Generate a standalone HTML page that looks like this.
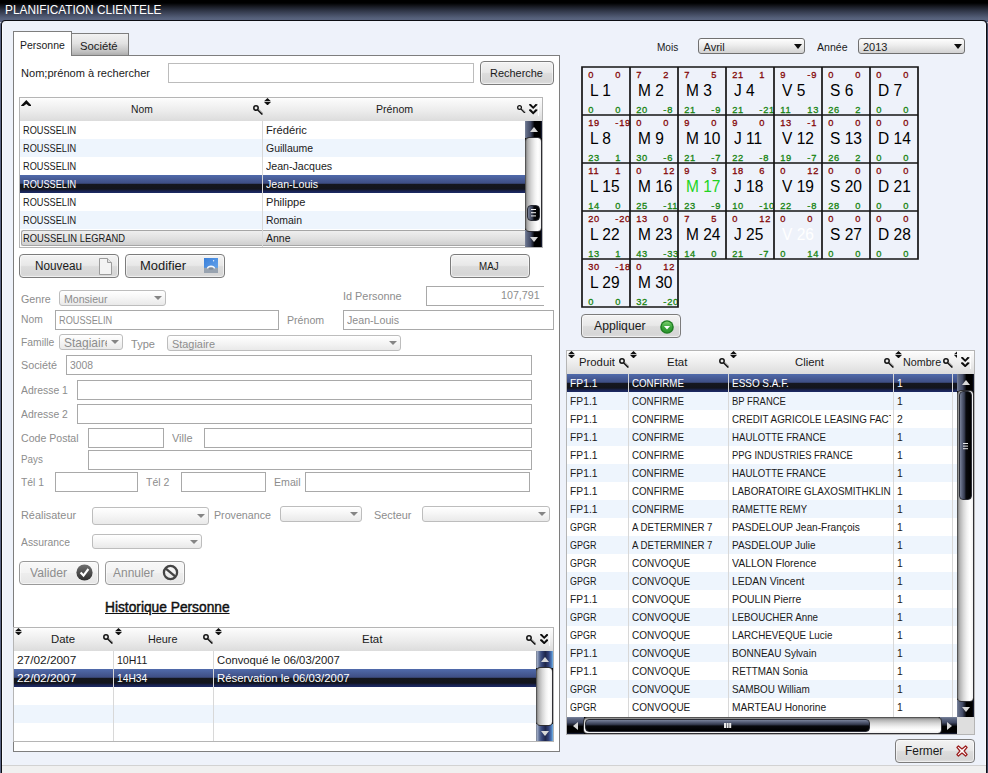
<!DOCTYPE html><html lang="fr"><head><meta charset="utf-8"><title>PLANIFICATION CLIENTELE</title><style>
*{box-sizing:border-box;margin:0;padding:0}
html,body{width:988px;height:773px;overflow:hidden;background:#f0f0f0}
body{position:relative;font-family:"Liberation Sans",sans-serif;font-size:11px;color:#1a1a1a}
div,span,svg,i,b,s{position:absolute}
.x{white-space:nowrap;transform-origin:0 0;display:block}
#title{left:0;top:0;width:988px;height:22px;background:linear-gradient(#000 0,#000 3px,#14161d 6px,#2c3242 10px,#41495f 14px,#55607a 18px,#5b6581 20px,#5b6581 22px)}
#win{left:0;top:20px;width:988px;height:753px;background:#0c0d12;border-radius:5px 5px 0 0;border-left:1px solid #5a6585;border-right:1px solid #3c455f}
#bot{left:2px;top:765px;width:984px;height:8px;background:#f0f0f0;border-top:1px solid #d2d2d2}
#body{left:2px;top:21px;width:984px;height:744px;background:#eef2fa;border-radius:4px 4px 0 0;border-left:1px solid #fafcff;border-right:1px solid #fafcff}
.panel{background:#fff;border:1px solid #7e7e7e}
.inp{background:#fff;border:1px solid #a9a9a9}
.sel{border:1px solid #bdbdbd;border-radius:3px;background:linear-gradient(#fff,#f6f6f6 45%,#e9e9e9)}
.sel i{right:3px;border:4px solid transparent;border-top:4.5px solid #858585;border-bottom:0}
.sel2{border:1px solid #707070;border-radius:3px;background:linear-gradient(#fefefe,#ededed 45%,#d2d2d2)}
.sel2 i{right:2.2px;top:4.7px;border:4.4px solid transparent;border-top:5px solid #0c0c0c;border-bottom:0}
.btn{border:1px solid #7c7c7c;border-radius:4px;background:linear-gradient(#f3f3f3,#e8e8e8 47%,#dcdcdc 53%,#d6d6d6 85%,#dcdcdc);box-shadow:inset 0 0 0 1px rgba(255,255,255,.55)}
.btn.dis{border-color:#9a9a9a;background:linear-gradient(#f8f8f8,#f3f3f3 48%,#ededed 52%,#e6e6e6)}
.hdr{background:linear-gradient(#fff 0,#fafafa 2px,#ececec 55%,#dcdcdc);border:1px solid #b5b5b5;border-bottom:0}
.tb{border:1px solid #b5b5b5;background:#fff}
.row{left:0;height:18px}
.alt{background:#eef5fd}
.selrow{background:linear-gradient(#506bac 0,#4a609c 3px,#3e4e84 8.3px,#15171f 9.2px,#13151c 14px,#192250 16px,#1c2a66 18px)}
.vline{width:1px;background:#d8d8d8}
.cell{width:50px;height:50px;border:2px solid transparent}
.cell b{font-weight:normal;font-size:17.4px;line-height:20px;left:7.4px;top:12.4px;white-space:nowrap;color:#000;transform:scaleX(.892);transform-origin:0 0}
.cell s{text-decoration:none;font-size:9.3px;line-height:10px;letter-spacing:.75px;white-space:nowrap;-webkit-text-stroke:.3px}
.cell .a{left:5.2px;top:1.6px;color:#840808}.cell .b{left:32.3px;top:1.6px;color:#840808}
.cell .c{left:5.2px;top:36.6px;color:#168410}.cell .d{left:32.3px;top:36.6px;color:#168410}
</style></head><body>
<div id="title"></div>
<span class="x" style="left:4.8px;top:2px;font-size:13px;line-height:15px;color:#fff;transform:scaleX(0.911);">PLANIFICATION CLIENTELE</span>
<div id="win"></div><div id="body"></div><div id="bot"></div>
<div class="panel" style="left:13px;top:55px;width:547px;height:697px"></div>
<div style="left:71px;top:33px;width:58px;height:23px;border:1px solid #7e7e7e;border-left:0;background:linear-gradient(#f2f2f2,#e2e2e2 45%,#c0c0c0 85%,#adadad)"></div>
<div style="left:13px;top:31px;width:59px;height:25px;border:1px solid #7e7e7e;border-bottom:0;background:#fff"></div>
<span class="x" style="left:20.3px;top:39px;font-size:11px;line-height:12px;color:#1a1a1a;transform:scaleX(0.951);">Personne</span>
<span class="x" style="left:80.2px;top:40px;font-size:11px;line-height:12px;color:#1a1a1a;transform:scaleX(1.025);">Société</span>
<span class="x" style="left:20.5px;top:67px;font-size:11px;line-height:12px;color:#1a1a1a;transform:scaleX(1.005);">Nom;prénom à rechercher</span>
<div class="inp" style="left:168px;top:63px;width:306px;height:20px;border-color:#bcbcbc"></div>
<div class="btn" style="left:480px;top:61px;width:74px;height:24px"></div>
<span class="x" style="left:489.5px;top:67px;font-size:11.3px;line-height:12px;color:#1a1a1a;transform:scaleX(0.969);">Recherche</span>
<div class="tb" style="left:19px;top:97px;width:524px;height:151px"></div>
<div class="hdr" style="left:19px;top:97px;width:524px;height:24px"></div>
<svg style="left:20.7px;top:99.8px" width="10.6" height="6" viewBox="0 0 10.6 6"><path d="M0 6 L0.3 5.2 L5.3 0 L10.3 5.2 L10.6 6 L7.9 6 L5.3 3.9 L2.7 6Z" fill="#0c0c0c"/></svg>
<span class="x" style="left:130.5px;top:103px;font-size:11px;line-height:12px;color:#1a1a1a;transform:scaleX(0.935);">Nom</span>
<svg style="left:252.5px;top:105px" width="10" height="10" viewBox="0 0 10 10"><circle cx="3" cy="3" r="2.2" fill="#e9e9e9" stroke="#111" stroke-width="1.5"/><path d="M4.7 4.9 L9.4 9.6" stroke="#111" stroke-width="1.4"/><path d="M5.7 4.3 L10 8.6" stroke="#777" stroke-width=".9"/></svg>
<svg style="left:263.8px;top:98px" width="7" height="7.4" viewBox="0 0 7 7.4"><path d="M0 3.3 L3.5 0 L7 3.3Z M0 4.1 L3.5 7.4 L7 4.1Z" fill="#111"/></svg>
<span class="x" style="left:375.5px;top:103px;font-size:11px;line-height:12px;color:#1a1a1a;transform:scaleX(0.964);">Prénom</span>
<svg style="left:517.3px;top:104.8px" width="8.5" height="8.5" viewBox="0 0 10 10"><circle cx="3" cy="3" r="2.2" fill="#e9e9e9" stroke="#111" stroke-width="1.5"/><path d="M4.7 4.9 L9.4 9.6" stroke="#111" stroke-width="1.4"/><path d="M5.7 4.3 L10 8.6" stroke="#777" stroke-width=".9"/></svg>
<svg style="left:529.3px;top:104.3px" width="8.4" height="10.4" viewBox="0 0 8.4 10.4"><path d="M0 0.2 L1.9 0 L4.2 2.4 L6.5 0 L8.4 0.2 L8.4 1.1 L4.2 5.1 L0 1.1Z M0 5.5 L1.9 5.3 L4.2 7.7 L6.5 5.3 L8.4 5.5 L8.4 6.4 L4.2 10.4 L0 6.4Z" fill="#0c0c0c"/></svg><div style="left:538.3px;top:102.3px;width:1px;height:14px;background:rgba(255,255,255,.85)"></div>
<div style="left:20px;top:121px;width:505px;height:126px;overflow:hidden">
<div class="row " style="top:0px;width:505px"></div>
<span class="x" style="left:2.6px;top:3px;font-size:11px;line-height:12px;color:#1a1a1a;transform:scaleX(0.835);">ROUSSELIN</span>
<span class="x" style="left:245.6px;top:3px;font-size:11px;line-height:12px;color:#1a1a1a;transform:scaleX(1.014);">Frédéric</span>
<div class="row alt" style="top:18px;width:505px"></div>
<span class="x" style="left:2.6px;top:21px;font-size:11px;line-height:12px;color:#1a1a1a;transform:scaleX(0.835);">ROUSSELIN</span>
<span class="x" style="left:245.6px;top:21px;font-size:11px;line-height:12px;color:#1a1a1a;transform:scaleX(0.951);">Guillaume</span>
<div class="row " style="top:36px;width:505px"></div>
<span class="x" style="left:2.6px;top:39px;font-size:11px;line-height:12px;color:#1a1a1a;transform:scaleX(0.835);">ROUSSELIN</span>
<span class="x" style="left:245.6px;top:39px;font-size:11px;line-height:12px;color:#1a1a1a;transform:scaleX(0.965);">Jean-Jacques</span>
<div class="row selrow" style="top:54px;width:505px"></div>
<span class="x" style="left:2.6px;top:57px;font-size:11px;line-height:12px;color:#fff;transform:scaleX(0.835);">ROUSSELIN</span>
<span class="x" style="left:245.6px;top:57px;font-size:11px;line-height:12px;color:#fff;transform:scaleX(0.967);">Jean-Louis</span>
<div class="row " style="top:72px;width:505px"></div>
<span class="x" style="left:2.6px;top:75px;font-size:11px;line-height:12px;color:#1a1a1a;transform:scaleX(0.835);">ROUSSELIN</span>
<span class="x" style="left:245.6px;top:75px;font-size:11px;line-height:12px;color:#1a1a1a;transform:scaleX(1.008);">Philippe</span>
<div class="row alt" style="top:90px;width:505px"></div>
<span class="x" style="left:2.6px;top:93px;font-size:11px;line-height:12px;color:#1a1a1a;transform:scaleX(0.835);">ROUSSELIN</span>
<span class="x" style="left:245.6px;top:93px;font-size:11px;line-height:12px;color:#1a1a1a;transform:scaleX(0.948);">Romain</span>
<div class="row" style="top:109px;left:1px;width:504px;height:16px;background:linear-gradient(#efefef,#e0e0e0 55%,#cfcfcf);border:1px solid #a6a6a6;border-right:0;border-radius:2.5px 0 0 2.5px"></div>
<span class="x" style="left:2.6px;top:111px;font-size:11px;line-height:12px;color:#1a1a1a;transform:scaleX(0.851);">ROUSSELIN LEGRAND</span>
<span class="x" style="left:245.6px;top:111px;font-size:11px;line-height:12px;color:#1a1a1a;transform:scaleX(0.954);">Anne</span>
<div class="vline" style="left:242px;top:0;height:126px"></div>
</div>
<div style="left:525px;top:121px;width:17px;height:126px;background:#000"><div style="left:0;top:0;width:17px;height:17px;background:linear-gradient(90deg,#7c859c 0,#5f6983 10%,#434b66 32%,#1b1e29 47%,#000 56%,#000 90%,#1d2440 100%)"></div><div style="left:0;top:109px;width:17px;height:17px;background:linear-gradient(90deg,#7c859c 0,#5f6983 10%,#434b66 32%,#1b1e29 47%,#000 56%,#000 90%,#1d2440 100%)"></div><div style="left:0;top:15.5px;width:17px;height:95px;border:1px solid #2e2e33;border-left-color:#555;border-radius:4.5px;background:linear-gradient(90deg,#858585 0,#b2b2b2 12%,#d6d6d6 35%,#f2f2f2 60%,#fff 80%,#f1f1f1 100%)"></div><div style="left:4.5px;top:6px;border:4px solid transparent;border-bottom:5px solid #d8d8d8;border-top:0"></div><div style="left:4.5px;top:115.5px;border:4px solid transparent;border-top:5px solid #d8d8d8;border-bottom:0"></div><div style="left:2.2px;top:84px;width:12.8px;height:16px;border-radius:4px;background:linear-gradient(90deg,#7a839a 0,#596179 18%,#363c50 40%,#08090c 55%,#000 100%);border:1px solid #2a2c35"></div><div style="left:5.8px;top:87.6px;width:5.2px;height:1.6px;background:#f4f4f4;box-shadow:0 3.2px 0 #f4f4f4,0 6.4px 0 #f4f4f4"></div></div>
<div class="btn" style="left:19px;top:254px;width:100px;height:24px"></div>
<span class="x" style="left:34.5px;top:259px;font-size:12px;line-height:14px;color:#1a1a1a;transform:scaleX(0.979);">Nouveau</span>
<svg style="left:98.7px;top:257.5px" width="13" height="17" viewBox="0 0 13 17"><path d="M0.5 0.5 H8.5 L12.5 4.5 V16.5 H0.5Z" fill="#f3f3f3" stroke="#9c9c9c"/><path d="M8.5 0.5 V4.5 H12.5" fill="#e2e2e2" stroke="#9c9c9c"/></svg>
<div class="btn" style="left:125px;top:254px;width:100px;height:24px"></div>
<span class="x" style="left:140.4px;top:259px;font-size:12px;line-height:14px;color:#1a1a1a;transform:scaleX(1.078);">Modifier</span>
<svg style="left:204px;top:257.8px" width="14" height="15" viewBox="0 0 14 15"><defs><linearGradient id="pg" x1="0" y1="0" x2="1" y2="1"><stop offset="0" stop-color="#3a7fd9"/><stop offset="1" stop-color="#6aa8ee"/></linearGradient></defs><rect width="14" height="15" fill="url(#pg)"/><rect x="0" y="9.8" width="14" height="5.2" fill="#98a3b0"/><path d="M2.8 10.6 C3 6.6 11 6.6 11.2 10.6Z" fill="#f6f8fb"/><ellipse cx="7" cy="10.5" rx="2.7" ry="1.3" fill="#7f8b99"/><circle cx="9.6" cy="2.8" r=".7" fill="#e8f1fc"/></svg>
<div class="btn" style="left:450px;top:254px;width:80px;height:24px"></div>
<span class="x" style="left:479.3px;top:260px;font-size:11px;line-height:12px;color:#1a1a1a;transform:scaleX(0.888);">MAJ</span>
<span class="x" style="left:20.7px;top:293px;font-size:11px;line-height:12px;color:#8d8d8d;transform:scaleX(0.972);">Genre</span>
<div class="sel" style="left:59px;top:290px;width:107px;height:16px"><i style="top:5.4px"></i></div>
<span class="x" style="left:63.5px;top:293px;font-size:11px;line-height:12px;color:#8d8d8d;transform:scaleX(0.961);">Monsieur</span>
<span class="x" style="left:342.6px;top:289.7px;font-size:11px;line-height:12px;color:#8d8d8d;transform:scaleX(0.988);">Id Personne</span>
<div class="inp" style="left:426px;top:286px;width:118px;height:20px;border-right:0"></div>
<span class="x" style="left:500.68px;top:289px;font-size:11px;line-height:12px;color:#8d8d8d;transform:scaleX(0.971);">107,791</span>
<span class="x" style="left:20.7px;top:313px;font-size:11px;line-height:12px;color:#8d8d8d;transform:scaleX(0.935);">Nom</span>
<div class="inp" style="left:55px;top:310px;width:224px;height:20px;"></div>
<span class="x" style="left:58.5px;top:313.6px;font-size:11px;line-height:12px;color:#8d8d8d;transform:scaleX(0.835);">ROUSSELIN</span>
<span class="x" style="left:286.8px;top:313.7px;font-size:11px;line-height:12px;color:#8d8d8d;transform:scaleX(0.964);">Prénom</span>
<div class="inp" style="left:343px;top:310px;width:211px;height:20px;"></div>
<span class="x" style="left:346.8px;top:313.6px;font-size:11px;line-height:12px;color:#8d8d8d;transform:scaleX(0.967);">Jean-Louis</span>
<span class="x" style="left:20.7px;top:336px;font-size:11px;line-height:12px;color:#8d8d8d;transform:scaleX(0.939);">Famille</span>
<div class="sel" style="left:59px;top:334px;width:64px;height:16px"><i style="top:5.4px"></i></div>
<div style="left:60px;top:335px;width:47px;height:14px;overflow:hidden"><span class="x" style="left:3.9px;top:0.6px;font-size:12.1px;line-height:14px;color:#8d8d8d;transform:scaleX(0.991);">Stagiaire</span></div>
<span class="x" style="left:130.7px;top:337.6px;font-size:11px;line-height:12px;color:#8d8d8d;transform:scaleX(1.004);">Type</span>
<div class="sel" style="left:167px;top:335.2px;width:234px;height:15.4px"><i style="top:5.1px"></i></div>
<span class="x" style="left:171.8px;top:337.5px;font-size:11px;line-height:12px;color:#8d8d8d;transform:scaleX(0.991);">Stagiaire</span>
<span class="x" style="left:20.7px;top:359px;font-size:11px;line-height:12px;color:#8d8d8d;transform:scaleX(0.982);">Société</span>
<div class="inp" style="left:66px;top:355px;width:466px;height:20px;"></div>
<span class="x" style="left:70px;top:359px;font-size:11px;line-height:12px;color:#8d8d8d;transform:scaleX(0.942);">3008</span>
<span class="x" style="left:20.7px;top:383.5px;font-size:11px;line-height:12px;color:#8d8d8d;transform:scaleX(0.946);">Adresse 1</span>
<div class="inp" style="left:77px;top:380px;width:455px;height:20px;"></div>
<span class="x" style="left:20.7px;top:407.5px;font-size:11px;line-height:12px;color:#8d8d8d;transform:scaleX(0.946);">Adresse 2</span>
<div class="inp" style="left:77px;top:404px;width:455px;height:20px;"></div>
<span class="x" style="left:20.7px;top:431.5px;font-size:11px;line-height:12px;color:#8d8d8d;transform:scaleX(0.961);">Code Postal</span>
<div class="inp" style="left:88px;top:428px;width:76px;height:20px;"></div>
<span class="x" style="left:171.5px;top:431.7px;font-size:11px;line-height:12px;color:#8d8d8d;transform:scaleX(0.996);">Ville</span>
<div class="inp" style="left:204px;top:428px;width:328px;height:20px;"></div>
<span class="x" style="left:20.7px;top:453px;font-size:11px;line-height:12px;color:#8d8d8d;transform:scaleX(0.891);">Pays</span>
<div class="inp" style="left:88px;top:450px;width:444px;height:20px;"></div>
<span class="x" style="left:20.7px;top:475.5px;font-size:11px;line-height:12px;color:#8d8d8d;transform:scaleX(0.941);">Tél 1</span>
<div class="inp" style="left:55px;top:472px;width:83px;height:20px;"></div>
<span class="x" style="left:145.5px;top:475.5px;font-size:11px;line-height:12px;color:#8d8d8d;transform:scaleX(0.953);">Tél 2</span>
<div class="inp" style="left:181px;top:472px;width:85px;height:20px;"></div>
<span class="x" style="left:274.2px;top:475.5px;font-size:11px;line-height:12px;color:#8d8d8d;transform:scaleX(0.964);">Email</span>
<div class="inp" style="left:305px;top:472px;width:225px;height:20px;"></div>
<span class="x" style="left:20.7px;top:508.6px;font-size:11px;line-height:12px;color:#8d8d8d;transform:scaleX(0.990);">Réalisateur</span>
<div class="sel" style="left:92px;top:506.5px;width:117px;height:18px"><i style="top:6.4px"></i></div>
<span class="x" style="left:214.2px;top:508.6px;font-size:11px;line-height:12px;color:#8d8d8d;transform:scaleX(0.970);">Provenance</span>
<div class="sel" style="left:280px;top:506.3px;width:82px;height:15.4px"><i style="top:5.1px"></i></div>
<span class="x" style="left:374px;top:508.6px;font-size:11px;line-height:12px;color:#8d8d8d;transform:scaleX(0.986);">Secteur</span>
<div class="sel" style="left:422px;top:506.3px;width:128px;height:15.4px"><i style="top:5.1px"></i></div>
<span class="x" style="left:20.7px;top:535.5px;font-size:11px;line-height:12px;color:#8d8d8d;transform:scaleX(0.941);">Assurance</span>
<div class="sel" style="left:92px;top:533.7px;width:110px;height:15px"><i style="top:4.9px"></i></div>
<div class="btn dis" style="left:19px;top:561px;width:80px;height:24px"></div>
<span class="x" style="left:29.5px;top:565.5px;font-size:12px;line-height:14px;color:#8d8d8d;transform:scaleX(1.015);">Valider</span>
<svg style="left:75.8px;top:564.3px" width="17" height="17" viewBox="0 0 17 17"><defs><linearGradient id="cg" x1="0" y1="0" x2="0" y2="1"><stop offset="0" stop-color="#707070"/><stop offset="1" stop-color="#2e2e2e"/></linearGradient></defs><circle cx="8.5" cy="8.5" r="8.1" fill="url(#cg)"/><path d="M4.6 8.6 L7.5 11.6 L12.4 5" fill="none" stroke="#fff" stroke-width="2.1"/></svg>
<div class="btn dis" style="left:105px;top:561px;width:80px;height:24px"></div>
<span class="x" style="left:112.5px;top:565.5px;font-size:12px;line-height:14px;color:#8d8d8d;transform:scaleX(0.997);">Annuler</span>
<svg style="left:162.2px;top:564.3px" width="17" height="17" viewBox="0 0 17 17"><circle cx="8.5" cy="8.5" r="6.6" fill="none" stroke="#454545" stroke-width="2.3"/><path d="M3.8 4.6 L13.2 12.4" stroke="#454545" stroke-width="2.3"/></svg>
<span class="x" style="left:104.5px;top:599px;font-size:14px;line-height:16px;color:#111;transform:scaleX(0.982);text-decoration:underline;-webkit-text-stroke:.45px #111;">Historique Personne</span>
<div class="tb" style="left:13px;top:627px;width:541px;height:115px"></div>
<div class="hdr" style="left:13px;top:627px;width:541px;height:24px"></div>
<svg style="left:14.6px;top:628px" width="7" height="7.4" viewBox="0 0 7 7.4"><path d="M0 3.3 L3.5 0 L7 3.3Z M0 4.1 L3.5 7.4 L7 4.1Z" fill="#111"/></svg>
<span class="x" style="left:51px;top:633px;font-size:11px;line-height:12px;color:#1a1a1a;transform:scaleX(1.033);">Date</span>
<svg style="left:103.4px;top:634.2px" width="10" height="10" viewBox="0 0 10 10"><circle cx="3" cy="3" r="2.2" fill="#e9e9e9" stroke="#111" stroke-width="1.5"/><path d="M4.7 4.9 L9.4 9.6" stroke="#111" stroke-width="1.4"/><path d="M5.7 4.3 L10 8.6" stroke="#777" stroke-width=".9"/></svg>
<svg style="left:114.9px;top:628px" width="7" height="7.4" viewBox="0 0 7 7.4"><path d="M0 3.3 L3.5 0 L7 3.3Z M0 4.1 L3.5 7.4 L7 4.1Z" fill="#111"/></svg>
<span class="x" style="left:147.5px;top:633px;font-size:11px;line-height:12px;color:#1a1a1a;transform:scaleX(0.984);">Heure</span>
<svg style="left:203px;top:634.2px" width="10" height="10" viewBox="0 0 10 10"><circle cx="3" cy="3" r="2.2" fill="#e9e9e9" stroke="#111" stroke-width="1.5"/><path d="M4.7 4.9 L9.4 9.6" stroke="#111" stroke-width="1.4"/><path d="M5.7 4.3 L10 8.6" stroke="#777" stroke-width=".9"/></svg>
<svg style="left:214.9px;top:628px" width="7" height="7.4" viewBox="0 0 7 7.4"><path d="M0 3.3 L3.5 0 L7 3.3Z M0 4.1 L3.5 7.4 L7 4.1Z" fill="#111"/></svg>
<span class="x" style="left:362.2px;top:633px;font-size:11px;line-height:12px;color:#1a1a1a;transform:scaleX(1.042);">Etat</span>
<svg style="left:526.3px;top:634.7px" width="10" height="10" viewBox="0 0 10 10"><circle cx="3" cy="3" r="2.2" fill="#e9e9e9" stroke="#111" stroke-width="1.5"/><path d="M4.7 4.9 L9.4 9.6" stroke="#111" stroke-width="1.4"/><path d="M5.7 4.3 L10 8.6" stroke="#777" stroke-width=".9"/></svg>
<svg style="left:539.5px;top:634px" width="8.4" height="10.4" viewBox="0 0 8.4 10.4"><path d="M0 0.2 L1.9 0 L4.2 2.4 L6.5 0 L8.4 0.2 L8.4 1.1 L4.2 5.1 L0 1.1Z M0 5.5 L1.9 5.3 L4.2 7.7 L6.5 5.3 L8.4 5.5 L8.4 6.4 L4.2 10.4 L0 6.4Z" fill="#0c0c0c"/></svg><div style="left:548.5px;top:632px;width:1px;height:14px;background:rgba(255,255,255,.85)"></div>
<div style="left:14px;top:651px;width:522px;height:90px;overflow:hidden">
<div class="row " style="top:0px;width:522px"></div>
<span class="x" style="left:2.8px;top:3px;font-size:11px;line-height:12px;color:#1a1a1a;transform:scaleX(1.077);">27/02/2007</span>
<span class="x" style="left:102.8px;top:3px;font-size:11px;line-height:12px;color:#1a1a1a;transform:scaleX(0.957);">10H11</span>
<span class="x" style="left:202.6px;top:3px;font-size:11px;line-height:12px;color:#1a1a1a;transform:scaleX(1.025);">Convoqué le 06/03/2007</span>
<div class="row selrow" style="top:18px;width:522px"></div>
<span class="x" style="left:2.8px;top:21px;font-size:11px;line-height:12px;color:#fff;transform:scaleX(1.077);">22/02/2007</span>
<span class="x" style="left:102.8px;top:21px;font-size:11px;line-height:12px;color:#fff;transform:scaleX(0.933);">14H34</span>
<span class="x" style="left:202.6px;top:21px;font-size:11px;line-height:12px;color:#fff;transform:scaleX(1.032);">Réservation le 06/03/2007</span>
<div class="row " style="top:36px;width:522px"></div>
<div class="row alt" style="top:54px;width:522px"></div>
<div class="row " style="top:72px;width:522px"></div>
<div class="vline" style="left:99px;top:0;height:90px"></div><div class="vline" style="left:199px;top:0;height:90px"></div>
</div>
<div style="left:536px;top:651px;width:17px;height:90px;background:#000"><div style="left:0;top:0;width:17px;height:17px;background:linear-gradient(90deg,#4a4f5e 0,#aab6cc 5%,#8492b3 12%,#55668f 22%,#37467a 34%,#1f2649 55%,#33427a 75%,#4a77b8 90%,#7ab9e4 100%)"></div><div style="left:0;top:73px;width:17px;height:17px;background:linear-gradient(90deg,#4a4f5e 0,#aab6cc 5%,#8492b3 12%,#55668f 22%,#37467a 34%,#1f2649 55%,#33427a 75%,#4a77b8 90%,#7ab9e4 100%)"></div><div style="left:0;top:15.5px;width:17px;height:59px;border:1px solid #2e2e33;border-left-color:#555;border-radius:4.5px;background:linear-gradient(90deg,#858585 0,#b2b2b2 12%,#d6d6d6 35%,#f2f2f2 60%,#fff 80%,#f1f1f1 100%)"></div><div style="left:4.5px;top:6px;border:4px solid transparent;border-bottom:5px solid #d8d8d8;border-top:0"></div><div style="left:4.5px;top:79.5px;border:4px solid transparent;border-top:5px solid #d8d8d8;border-bottom:0"></div></div>
<span class="x" style="left:657px;top:40.6px;font-size:11px;line-height:12px;color:#1a1a1a;transform:scaleX(0.912);">Mois</span>
<div class="sel2" style="left:698px;top:38px;width:107px;height:16px"><i></i></div>
<span class="x" style="left:703.5px;top:40.6px;font-size:11px;line-height:12px;color:#222;">Avril</span>
<span class="x" style="left:817px;top:40.6px;font-size:11px;line-height:12px;color:#1a1a1a;transform:scaleX(0.959);">Année</span>
<div class="sel2" style="left:858px;top:38px;width:107px;height:16px"><i></i></div>
<span class="x" style="left:863px;top:40.6px;font-size:11px;line-height:12px;color:#222;">2013</span>
<div class="cell" style="left:581px;top:66px"><s class="a">0</s><s class="b">0</s><b>L 1</b><s class="c">0</s><s class="d">0</s></div>
<div class="cell" style="left:629px;top:66px"><s class="a">7</s><s class="b">2</s><b>M 2</b><s class="c">20</s><s class="d">-8</s></div>
<div class="cell" style="left:677px;top:66px"><s class="a">7</s><s class="b">5</s><b>M 3</b><s class="c">21</s><s class="d">-9</s></div>
<div class="cell" style="left:725px;top:66px"><s class="a">21</s><s class="b">1</s><b>J 4</b><s class="c">21</s><s class="d">-21</s></div>
<div class="cell" style="left:773px;top:66px"><s class="a">9</s><s class="b">-9</s><b>V 5</b><s class="c">11</s><s class="d">13</s></div>
<div class="cell" style="left:821px;top:66px"><s class="a">0</s><s class="b">0</s><b>S 6</b><s class="c">26</s><s class="d">2</s></div>
<div class="cell" style="left:869px;top:66px"><s class="a">0</s><s class="b">0</s><b>D 7</b><s class="c">0</s><s class="d">0</s></div>
<div class="cell" style="left:581px;top:114px"><s class="a">19</s><s class="b">-19</s><b>L 8</b><s class="c">23</s><s class="d">1</s></div>
<div class="cell" style="left:629px;top:114px"><s class="a">0</s><s class="b">0</s><b>M 9</b><s class="c">30</s><s class="d">-6</s></div>
<div class="cell" style="left:677px;top:114px"><s class="a">9</s><s class="b">0</s><b>M 10</b><s class="c">21</s><s class="d">-7</s></div>
<div class="cell" style="left:725px;top:114px"><s class="a">9</s><s class="b">0</s><b>J 11</b><s class="c">22</s><s class="d">-8</s></div>
<div class="cell" style="left:773px;top:114px"><s class="a">13</s><s class="b">-1</s><b>V 12</b><s class="c">19</s><s class="d">-7</s></div>
<div class="cell" style="left:821px;top:114px"><s class="a">0</s><s class="b">0</s><b>S 13</b><s class="c">26</s><s class="d">2</s></div>
<div class="cell" style="left:869px;top:114px"><s class="a">0</s><s class="b">0</s><b>D 14</b><s class="c">0</s><s class="d">0</s></div>
<div class="cell" style="left:581px;top:162px"><s class="a">11</s><s class="b">1</s><b>L 15</b><s class="c">14</s><s class="d">0</s></div>
<div class="cell" style="left:629px;top:162px"><s class="a">0</s><s class="b">12</s><b>M 16</b><s class="c">25</s><s class="d">-11</s></div>
<div class="cell" style="left:677px;top:162px"><s class="a">9</s><s class="b">3</s><b style="color:#22d422">M 17</b><s class="c">23</s><s class="d">-9</s></div>
<div class="cell" style="left:725px;top:162px"><s class="a">18</s><s class="b">6</s><b>J 18</b><s class="c">10</s><s class="d">-10</s></div>
<div class="cell" style="left:773px;top:162px"><s class="a">0</s><s class="b">12</s><b>V 19</b><s class="c">22</s><s class="d">-8</s></div>
<div class="cell" style="left:821px;top:162px"><s class="a">0</s><s class="b">0</s><b>S 20</b><s class="c">28</s><s class="d">0</s></div>
<div class="cell" style="left:869px;top:162px"><s class="a">0</s><s class="b">0</s><b>D 21</b><s class="c">0</s><s class="d">0</s></div>
<div class="cell" style="left:581px;top:210px"><s class="a">20</s><s class="b">-20</s><b>L 22</b><s class="c">13</s><s class="d">1</s></div>
<div class="cell" style="left:629px;top:210px"><s class="a">13</s><s class="b">0</s><b>M 23</b><s class="c">43</s><s class="d">-33</s></div>
<div class="cell" style="left:677px;top:210px"><s class="a">7</s><s class="b">5</s><b>M 24</b><s class="c">14</s><s class="d">0</s></div>
<div class="cell" style="left:725px;top:210px"><s class="a">0</s><s class="b">12</s><b>J 25</b><s class="c">21</s><s class="d">-7</s></div>
<div class="cell" style="left:773px;top:210px"><s class="a">0</s><s class="b">0</s><b style="color:#fff">V 26</b><s class="c">0</s><s class="d">14</s></div>
<div class="cell" style="left:821px;top:210px"><s class="a">0</s><s class="b">0</s><b>S 27</b><s class="c">0</s><s class="d">0</s></div>
<div class="cell" style="left:869px;top:210px"><s class="a">0</s><s class="b">0</s><b>D 28</b><s class="c">0</s><s class="d">0</s></div>
<div class="cell" style="left:581px;top:258px"><s class="a">30</s><s class="b">-18</s><b>L 29</b><s class="c">0</s><s class="d">0</s></div>
<div class="cell" style="left:629px;top:258px"><s class="a">0</s><s class="b">12</s><b>M 30</b><s class="c">32</s><s class="d">-20</s></div>
<svg style="left:0;top:0" width="988" height="320" viewBox="0 0 988 320"><path d="M581.15 67 H918.85 M581.15 115 H918.85 M581.15 163 H918.85 M581.15 211 H918.85 M581.15 259 H918.85 M581.15 307 H678.85 M582 66.15 V307.85 M630 66.15 V307.85 M678 66.15 V307.85 M726 66.15 V259.85 M774 66.15 V259.85 M822 66.15 V259.85 M870 66.15 V259.85 M918 66.15 V259.85" fill="none" stroke="#141414" stroke-width="1.7"/></svg>
<div class="btn" style="left:581px;top:314px;width:100px;height:24px"></div>
<span class="x" style="left:594px;top:318.5px;font-size:12px;line-height:14px;color:#1a1a1a;transform:scaleX(1.016);">Appliquer</span>
<svg style="left:659.8px;top:319.6px" width="14" height="14" viewBox="0 0 14 14"><defs><linearGradient id="gg" x1="0" y1="0" x2="0" y2="1"><stop offset="0" stop-color="#7ccf6e"/><stop offset=".5" stop-color="#3aa53a"/><stop offset="1" stop-color="#2d962f"/></linearGradient></defs><circle cx="7" cy="7" r="6.8" fill="#1f7d22"/><circle cx="7" cy="7" r="5.4" fill="url(#gg)"/><path d="M3.9 5.9 H10.1 L7 9.4Z" fill="#fff"/></svg>
<div class="tb" style="left:566px;top:350px;width:409px;height:385px"></div>
<div class="hdr" style="left:566px;top:350px;width:409px;height:24px"></div>
<svg style="left:568px;top:351px" width="7" height="7.4" viewBox="0 0 7 7.4"><path d="M0 3.3 L3.5 0 L7 3.3Z M0 4.1 L3.5 7.4 L7 4.1Z" fill="#111"/></svg>
<span class="x" style="left:578.6px;top:356px;font-size:11px;line-height:12px;color:#1a1a1a;transform:scaleX(1.028);">Produit</span>
<svg style="left:618.8px;top:358px" width="10" height="10" viewBox="0 0 10 10"><circle cx="3" cy="3" r="2.2" fill="#e9e9e9" stroke="#111" stroke-width="1.5"/><path d="M4.7 4.9 L9.4 9.6" stroke="#111" stroke-width="1.4"/><path d="M5.7 4.3 L10 8.6" stroke="#777" stroke-width=".9"/></svg>
<svg style="left:630.2px;top:351px" width="7" height="7.4" viewBox="0 0 7 7.4"><path d="M0 3.3 L3.5 0 L7 3.3Z M0 4.1 L3.5 7.4 L7 4.1Z" fill="#111"/></svg>
<span class="x" style="left:666.5px;top:356px;font-size:11px;line-height:12px;color:#1a1a1a;transform:scaleX(1.042);">Etat</span>
<svg style="left:718.8px;top:358px" width="10" height="10" viewBox="0 0 10 10"><circle cx="3" cy="3" r="2.2" fill="#e9e9e9" stroke="#111" stroke-width="1.5"/><path d="M4.7 4.9 L9.4 9.6" stroke="#111" stroke-width="1.4"/><path d="M5.7 4.3 L10 8.6" stroke="#777" stroke-width=".9"/></svg>
<svg style="left:730.2px;top:351px" width="7" height="7.4" viewBox="0 0 7 7.4"><path d="M0 3.3 L3.5 0 L7 3.3Z M0 4.1 L3.5 7.4 L7 4.1Z" fill="#111"/></svg>
<span class="x" style="left:795.3px;top:356px;font-size:11px;line-height:12px;color:#1a1a1a;transform:scaleX(1.031);">Client</span>
<svg style="left:883.8px;top:358px" width="10" height="10" viewBox="0 0 10 10"><circle cx="3" cy="3" r="2.2" fill="#e9e9e9" stroke="#111" stroke-width="1.5"/><path d="M4.7 4.9 L9.4 9.6" stroke="#111" stroke-width="1.4"/><path d="M5.7 4.3 L10 8.6" stroke="#777" stroke-width=".9"/></svg>
<svg style="left:895.4px;top:351px" width="7" height="7.4" viewBox="0 0 7 7.4"><path d="M0 3.3 L3.5 0 L7 3.3Z M0 4.1 L3.5 7.4 L7 4.1Z" fill="#111"/></svg>
<span class="x" style="left:902.8px;top:356px;font-size:11px;line-height:12px;color:#1a1a1a;transform:scaleX(0.975);">Nombre</span>
<svg style="left:942.7px;top:357.8px" width="10" height="10" viewBox="0 0 10 10"><circle cx="3" cy="3" r="2.2" fill="#e9e9e9" stroke="#111" stroke-width="1.5"/><path d="M4.7 4.9 L9.4 9.6" stroke="#111" stroke-width="1.4"/><path d="M5.7 4.3 L10 8.6" stroke="#777" stroke-width=".9"/></svg>
<div style="left:953.5px;top:351px;width:3px;height:8px;overflow:hidden"><svg style="left:0px;top:0px" width="7" height="7.4" viewBox="0 0 7 7.4"><path d="M0 3.3 L3.5 0 L7 3.3Z M0 4.1 L3.5 7.4 L7 4.1Z" fill="#111"/></svg></div>
<svg style="left:961.2px;top:357.1px" width="8.4" height="10.4" viewBox="0 0 8.4 10.4"><path d="M0 0.2 L1.9 0 L4.2 2.4 L6.5 0 L8.4 0.2 L8.4 1.1 L4.2 5.1 L0 1.1Z M0 5.5 L1.9 5.3 L4.2 7.7 L6.5 5.3 L8.4 5.5 L8.4 6.4 L4.2 10.4 L0 6.4Z" fill="#0c0c0c"/></svg><div style="left:970.2px;top:355.1px;width:1px;height:14px;background:rgba(255,255,255,.85)"></div>
<div style="left:567px;top:374px;width:390px;height:343px;overflow:hidden">
<div class="row selrow" style="top:0px;width:391px"></div>
<span class="x" style="left:2.6px;top:3px;font-size:11px;line-height:12px;color:#fff;transform:scaleX(0.936);">FP1.1</span>
<span class="x" style="left:64.6px;top:3px;font-size:11px;line-height:12px;color:#fff;transform:scaleX(0.885);">CONFIRME</span>
<div style="left:164px;top:0px;width:159.5px;height:18px;overflow:hidden"><span class="x" style="left:0.6px;top:3px;font-size:11px;line-height:12px;color:#fff;transform:scaleX(0.903);">ESSO S.A.F.</span></div>
<span class="x" style="left:329.8px;top:3px;font-size:11px;line-height:12px;color:#fff;transform:scaleX(0.942);">1</span>
<div class="row alt" style="top:18px;width:391px"></div>
<span class="x" style="left:2.6px;top:21px;font-size:11px;line-height:12px;color:#1a1a1a;transform:scaleX(0.936);">FP1.1</span>
<span class="x" style="left:64.6px;top:21px;font-size:11px;line-height:12px;color:#1a1a1a;transform:scaleX(0.885);">CONFIRME</span>
<div style="left:164px;top:18px;width:159.5px;height:18px;overflow:hidden"><span class="x" style="left:0.6px;top:3px;font-size:11px;line-height:12px;color:#1a1a1a;transform:scaleX(0.858);">BP FRANCE</span></div>
<span class="x" style="left:329.8px;top:21px;font-size:11px;line-height:12px;color:#1a1a1a;transform:scaleX(0.942);">1</span>
<div class="row " style="top:36px;width:391px"></div>
<span class="x" style="left:2.6px;top:39px;font-size:11px;line-height:12px;color:#1a1a1a;transform:scaleX(0.936);">FP1.1</span>
<span class="x" style="left:64.6px;top:39px;font-size:11px;line-height:12px;color:#1a1a1a;transform:scaleX(0.885);">CONFIRME</span>
<div style="left:164px;top:36px;width:159.5px;height:18px;overflow:hidden"><span class="x" style="left:0.6px;top:3px;font-size:11px;line-height:12px;color:#1a1a1a;transform:scaleX(0.894);">CREDIT AGRICOLE LEASING FACT</span></div>
<span class="x" style="left:329.8px;top:39px;font-size:11px;line-height:12px;color:#1a1a1a;transform:scaleX(0.942);">2</span>
<div class="row alt" style="top:54px;width:391px"></div>
<span class="x" style="left:2.6px;top:57px;font-size:11px;line-height:12px;color:#1a1a1a;transform:scaleX(0.936);">FP1.1</span>
<span class="x" style="left:64.6px;top:57px;font-size:11px;line-height:12px;color:#1a1a1a;transform:scaleX(0.885);">CONFIRME</span>
<div style="left:164px;top:54px;width:159.5px;height:18px;overflow:hidden"><span class="x" style="left:0.6px;top:3px;font-size:11px;line-height:12px;color:#1a1a1a;transform:scaleX(0.878);">HAULOTTE FRANCE</span></div>
<span class="x" style="left:329.8px;top:57px;font-size:11px;line-height:12px;color:#1a1a1a;transform:scaleX(0.942);">1</span>
<div class="row " style="top:72px;width:391px"></div>
<span class="x" style="left:2.6px;top:75px;font-size:11px;line-height:12px;color:#1a1a1a;transform:scaleX(0.936);">FP1.1</span>
<span class="x" style="left:64.6px;top:75px;font-size:11px;line-height:12px;color:#1a1a1a;transform:scaleX(0.885);">CONFIRME</span>
<div style="left:164px;top:72px;width:159.5px;height:18px;overflow:hidden"><span class="x" style="left:0.6px;top:3px;font-size:11px;line-height:12px;color:#1a1a1a;transform:scaleX(0.855);">PPG INDUSTRIES FRANCE</span></div>
<span class="x" style="left:329.8px;top:75px;font-size:11px;line-height:12px;color:#1a1a1a;transform:scaleX(0.942);">1</span>
<div class="row alt" style="top:90px;width:391px"></div>
<span class="x" style="left:2.6px;top:93px;font-size:11px;line-height:12px;color:#1a1a1a;transform:scaleX(0.936);">FP1.1</span>
<span class="x" style="left:64.6px;top:93px;font-size:11px;line-height:12px;color:#1a1a1a;transform:scaleX(0.885);">CONFIRME</span>
<div style="left:164px;top:90px;width:159.5px;height:18px;overflow:hidden"><span class="x" style="left:0.6px;top:3px;font-size:11px;line-height:12px;color:#1a1a1a;transform:scaleX(0.878);">HAULOTTE FRANCE</span></div>
<span class="x" style="left:329.8px;top:93px;font-size:11px;line-height:12px;color:#1a1a1a;transform:scaleX(0.942);">1</span>
<div class="row " style="top:108px;width:391px"></div>
<span class="x" style="left:2.6px;top:111px;font-size:11px;line-height:12px;color:#1a1a1a;transform:scaleX(0.936);">FP1.1</span>
<span class="x" style="left:64.6px;top:111px;font-size:11px;line-height:12px;color:#1a1a1a;transform:scaleX(0.885);">CONFIRME</span>
<div style="left:164px;top:108px;width:159.5px;height:18px;overflow:hidden"><span class="x" style="left:0.6px;top:3px;font-size:11px;line-height:12px;color:#1a1a1a;transform:scaleX(0.897);">LABORATOIRE GLAXOSMITHKLIN</span></div>
<span class="x" style="left:329.8px;top:111px;font-size:11px;line-height:12px;color:#1a1a1a;transform:scaleX(0.942);">1</span>
<div class="row alt" style="top:126px;width:391px"></div>
<span class="x" style="left:2.6px;top:129px;font-size:11px;line-height:12px;color:#1a1a1a;transform:scaleX(0.936);">FP1.1</span>
<span class="x" style="left:64.6px;top:129px;font-size:11px;line-height:12px;color:#1a1a1a;transform:scaleX(0.885);">CONFIRME</span>
<div style="left:164px;top:126px;width:159.5px;height:18px;overflow:hidden"><span class="x" style="left:0.6px;top:3px;font-size:11px;line-height:12px;color:#1a1a1a;transform:scaleX(0.858);">RAMETTE REMY</span></div>
<span class="x" style="left:329.8px;top:129px;font-size:11px;line-height:12px;color:#1a1a1a;transform:scaleX(0.942);">1</span>
<div class="row " style="top:144px;width:391px"></div>
<span class="x" style="left:2.6px;top:147px;font-size:11px;line-height:12px;color:#1a1a1a;transform:scaleX(0.815);">GPGR</span>
<span class="x" style="left:64.6px;top:147px;font-size:11px;line-height:12px;color:#1a1a1a;transform:scaleX(0.877);">A DETERMINER 7</span>
<div style="left:164px;top:144px;width:159.5px;height:18px;overflow:hidden"><span class="x" style="left:0.6px;top:3px;font-size:11px;line-height:12px;color:#1a1a1a;transform:scaleX(0.920);">PASDELOUP Jean-François</span></div>
<span class="x" style="left:329.8px;top:147px;font-size:11px;line-height:12px;color:#1a1a1a;transform:scaleX(0.942);">1</span>
<div class="row alt" style="top:162px;width:391px"></div>
<span class="x" style="left:2.6px;top:165px;font-size:11px;line-height:12px;color:#1a1a1a;transform:scaleX(0.815);">GPGR</span>
<span class="x" style="left:64.6px;top:165px;font-size:11px;line-height:12px;color:#1a1a1a;transform:scaleX(0.877);">A DETERMINER 7</span>
<div style="left:164px;top:162px;width:159.5px;height:18px;overflow:hidden"><span class="x" style="left:0.6px;top:3px;font-size:11px;line-height:12px;color:#1a1a1a;transform:scaleX(0.908);">PASDELOUP Julie</span></div>
<span class="x" style="left:329.8px;top:165px;font-size:11px;line-height:12px;color:#1a1a1a;transform:scaleX(0.942);">1</span>
<div class="row " style="top:180px;width:391px"></div>
<span class="x" style="left:2.6px;top:183px;font-size:11px;line-height:12px;color:#1a1a1a;transform:scaleX(0.815);">GPGR</span>
<span class="x" style="left:64.6px;top:183px;font-size:11px;line-height:12px;color:#1a1a1a;transform:scaleX(0.908);">CONVOQUE</span>
<div style="left:164px;top:180px;width:159.5px;height:18px;overflow:hidden"><span class="x" style="left:0.6px;top:3px;font-size:11px;line-height:12px;color:#1a1a1a;transform:scaleX(0.953);">VALLON Florence</span></div>
<span class="x" style="left:329.8px;top:183px;font-size:11px;line-height:12px;color:#1a1a1a;transform:scaleX(0.942);">1</span>
<div class="row alt" style="top:198px;width:391px"></div>
<span class="x" style="left:2.6px;top:201px;font-size:11px;line-height:12px;color:#1a1a1a;transform:scaleX(0.815);">GPGR</span>
<span class="x" style="left:64.6px;top:201px;font-size:11px;line-height:12px;color:#1a1a1a;transform:scaleX(0.908);">CONVOQUE</span>
<div style="left:164px;top:198px;width:159.5px;height:18px;overflow:hidden"><span class="x" style="left:0.6px;top:3px;font-size:11px;line-height:12px;color:#1a1a1a;transform:scaleX(0.949);">LEDAN Vincent</span></div>
<span class="x" style="left:329.8px;top:201px;font-size:11px;line-height:12px;color:#1a1a1a;transform:scaleX(0.942);">1</span>
<div class="row " style="top:216px;width:391px"></div>
<span class="x" style="left:2.6px;top:219px;font-size:11px;line-height:12px;color:#1a1a1a;transform:scaleX(0.936);">FP1.1</span>
<span class="x" style="left:64.6px;top:219px;font-size:11px;line-height:12px;color:#1a1a1a;transform:scaleX(0.908);">CONVOQUE</span>
<div style="left:164px;top:216px;width:159.5px;height:18px;overflow:hidden"><span class="x" style="left:0.6px;top:3px;font-size:11px;line-height:12px;color:#1a1a1a;transform:scaleX(0.945);">POULIN Pierre</span></div>
<span class="x" style="left:329.8px;top:219px;font-size:11px;line-height:12px;color:#1a1a1a;transform:scaleX(0.942);">1</span>
<div class="row alt" style="top:234px;width:391px"></div>
<span class="x" style="left:2.6px;top:237px;font-size:11px;line-height:12px;color:#1a1a1a;transform:scaleX(0.815);">GPGR</span>
<span class="x" style="left:64.6px;top:237px;font-size:11px;line-height:12px;color:#1a1a1a;transform:scaleX(0.908);">CONVOQUE</span>
<div style="left:164px;top:234px;width:159.5px;height:18px;overflow:hidden"><span class="x" style="left:0.6px;top:3px;font-size:11px;line-height:12px;color:#1a1a1a;transform:scaleX(0.891);">LEBOUCHER Anne</span></div>
<span class="x" style="left:329.8px;top:237px;font-size:11px;line-height:12px;color:#1a1a1a;transform:scaleX(0.942);">1</span>
<div class="row " style="top:252px;width:391px"></div>
<span class="x" style="left:2.6px;top:255px;font-size:11px;line-height:12px;color:#1a1a1a;transform:scaleX(0.815);">GPGR</span>
<span class="x" style="left:64.6px;top:255px;font-size:11px;line-height:12px;color:#1a1a1a;transform:scaleX(0.908);">CONVOQUE</span>
<div style="left:164px;top:252px;width:159.5px;height:18px;overflow:hidden"><span class="x" style="left:0.6px;top:3px;font-size:11px;line-height:12px;color:#1a1a1a;transform:scaleX(0.892);">LARCHEVEQUE Lucie</span></div>
<span class="x" style="left:329.8px;top:255px;font-size:11px;line-height:12px;color:#1a1a1a;transform:scaleX(0.942);">1</span>
<div class="row alt" style="top:270px;width:391px"></div>
<span class="x" style="left:2.6px;top:273px;font-size:11px;line-height:12px;color:#1a1a1a;transform:scaleX(0.936);">FP1.1</span>
<span class="x" style="left:64.6px;top:273px;font-size:11px;line-height:12px;color:#1a1a1a;transform:scaleX(0.908);">CONVOQUE</span>
<div style="left:164px;top:270px;width:159.5px;height:18px;overflow:hidden"><span class="x" style="left:0.6px;top:3px;font-size:11px;line-height:12px;color:#1a1a1a;transform:scaleX(0.909);">BONNEAU Sylvain</span></div>
<span class="x" style="left:329.8px;top:273px;font-size:11px;line-height:12px;color:#1a1a1a;transform:scaleX(0.942);">1</span>
<div class="row " style="top:288px;width:391px"></div>
<span class="x" style="left:2.6px;top:291px;font-size:11px;line-height:12px;color:#1a1a1a;transform:scaleX(0.936);">FP1.1</span>
<span class="x" style="left:64.6px;top:291px;font-size:11px;line-height:12px;color:#1a1a1a;transform:scaleX(0.908);">CONVOQUE</span>
<div style="left:164px;top:288px;width:159.5px;height:18px;overflow:hidden"><span class="x" style="left:0.6px;top:3px;font-size:11px;line-height:12px;color:#1a1a1a;transform:scaleX(0.897);">RETTMAN Sonia</span></div>
<span class="x" style="left:329.8px;top:291px;font-size:11px;line-height:12px;color:#1a1a1a;transform:scaleX(0.942);">1</span>
<div class="row alt" style="top:306px;width:391px"></div>
<span class="x" style="left:2.6px;top:309px;font-size:11px;line-height:12px;color:#1a1a1a;transform:scaleX(0.815);">GPGR</span>
<span class="x" style="left:64.6px;top:309px;font-size:11px;line-height:12px;color:#1a1a1a;transform:scaleX(0.908);">CONVOQUE</span>
<div style="left:164px;top:306px;width:159.5px;height:18px;overflow:hidden"><span class="x" style="left:0.6px;top:3px;font-size:11px;line-height:12px;color:#1a1a1a;transform:scaleX(0.902);">SAMBOU William</span></div>
<span class="x" style="left:329.8px;top:309px;font-size:11px;line-height:12px;color:#1a1a1a;transform:scaleX(0.942);">1</span>
<div class="row " style="top:324px;width:391px"></div>
<span class="x" style="left:2.6px;top:327px;font-size:11px;line-height:12px;color:#1a1a1a;transform:scaleX(0.815);">GPGR</span>
<span class="x" style="left:64.6px;top:327px;font-size:11px;line-height:12px;color:#1a1a1a;transform:scaleX(0.908);">CONVOQUE</span>
<div style="left:164px;top:324px;width:159.5px;height:18px;overflow:hidden"><span class="x" style="left:0.6px;top:3px;font-size:11px;line-height:12px;color:#1a1a1a;transform:scaleX(0.930);">MARTEAU Honorine</span></div>
<span class="x" style="left:329.8px;top:327px;font-size:11px;line-height:12px;color:#1a1a1a;transform:scaleX(0.942);">1</span>
<div class="vline" style="left:61px;top:0;height:343px"></div>
<div class="vline" style="left:161px;top:0;height:343px"></div>
<div class="vline" style="left:326px;top:0;height:343px"></div>
<div class="vline" style="left:385px;top:0;height:343px"></div>
</div>
<div style="left:957px;top:374px;width:17px;height:343px;background:#000"><div style="left:0;top:0;width:17px;height:17px;background:linear-gradient(90deg,#7c859c 0,#5f6983 10%,#434b66 32%,#1b1e29 47%,#000 56%,#000 90%,#1d2440 100%)"></div><div style="left:0;top:326px;width:17px;height:17px;background:linear-gradient(90deg,#7c859c 0,#5f6983 10%,#434b66 32%,#1b1e29 47%,#000 56%,#000 90%,#1d2440 100%)"></div><div style="left:0;top:15.5px;width:17px;height:312px;border:1px solid #2e2e33;border-left-color:#555;border-radius:4.5px;background:linear-gradient(90deg,#858585 0,#b2b2b2 12%,#d6d6d6 35%,#f2f2f2 60%,#fff 80%,#f1f1f1 100%)"></div><div style="left:4.5px;top:6px;border:4px solid transparent;border-bottom:5px solid #d8d8d8;border-top:0"></div><div style="left:4.5px;top:332.5px;border:4px solid transparent;border-top:5px solid #d8d8d8;border-bottom:0"></div><div style="left:2.2px;top:16.5px;width:12.8px;height:109.5px;border-radius:4px;background:linear-gradient(90deg,#7a839a 0,#596179 18%,#363c50 40%,#08090c 55%,#000 100%);border:1px solid #2a2c35"></div></div>
<div style="left:962.8px;top:442.6px;width:5.4px;height:1.3px;background:#e9e9e9;box-shadow:0 2.6px 0 #e9e9e9,0 5.2px 0 #e9e9e9"></div>
<div style="left:567px;top:717px;width:390px;height:17px;background:#000"><div style="left:0;top:0;width:17px;height:17px;background:linear-gradient(180deg,#7c859c 0,#5f6983 10%,#434b66 32%,#1b1e29 47%,#000 56%,#000 90%,#1d2440 100%)"></div><div style="left:373px;top:0;width:17px;height:17px;background:linear-gradient(180deg,#7c859c 0,#5f6983 10%,#434b66 32%,#1b1e29 47%,#000 56%,#000 90%,#1d2440 100%)"></div><div style="left:15.5px;top:0;width:359px;height:17px;border:1px solid #2e2e33;border-top-color:#555;border-radius:4.5px;background:linear-gradient(180deg,#858585 0,#b2b2b2 12%,#d6d6d6 35%,#f2f2f2 60%,#fff 80%,#f1f1f1 100%)"></div><div style="left:5.8px;top:4.5px;border:4px solid transparent;border-right:5px solid #d8d8d8;border-left:0"></div><div style="left:379.5px;top:4.5px;border:4px solid transparent;border-left:5px solid #d8d8d8;border-right:0"></div><div style="left:17.5px;top:2.2px;width:285px;height:12.8px;border-radius:4px;background:linear-gradient(180deg,#7a839a 0,#596179 18%,#363c50 40%,#08090c 55%,#000 100%);border:1px solid #2a2c35"></div><div style="left:157.3px;top:5.8px;width:1.3px;height:5.4px;background:#e9e9e9;box-shadow:2.6px 0 0 #e9e9e9,5.2px 0 0 #e9e9e9"></div></div>
<div style="left:957px;top:717px;width:17px;height:17px;background:#dedede"></div>
<div class="btn" style="left:895px;top:739px;width:80px;height:24px"></div>
<span class="x" style="left:904.5px;top:744px;font-size:12px;line-height:14px;color:#1a1a1a;transform:scaleX(0.991);">Fermer</span>
<svg style="left:955.8px;top:745.4px" width="12" height="12" viewBox="0 0 12 12"><path d="M2.4 0.9 L6 3.9 L9.6 0.9 L11.1 2.4 L8.1 6 L11.1 9.6 L9.6 11.1 L6 8.1 L2.4 11.1 L0.9 9.6 L3.9 6 L0.9 2.4Z" fill="#fff" stroke="#9b1c1c" stroke-width="1.3" stroke-linejoin="round"/></svg>
</body></html>
